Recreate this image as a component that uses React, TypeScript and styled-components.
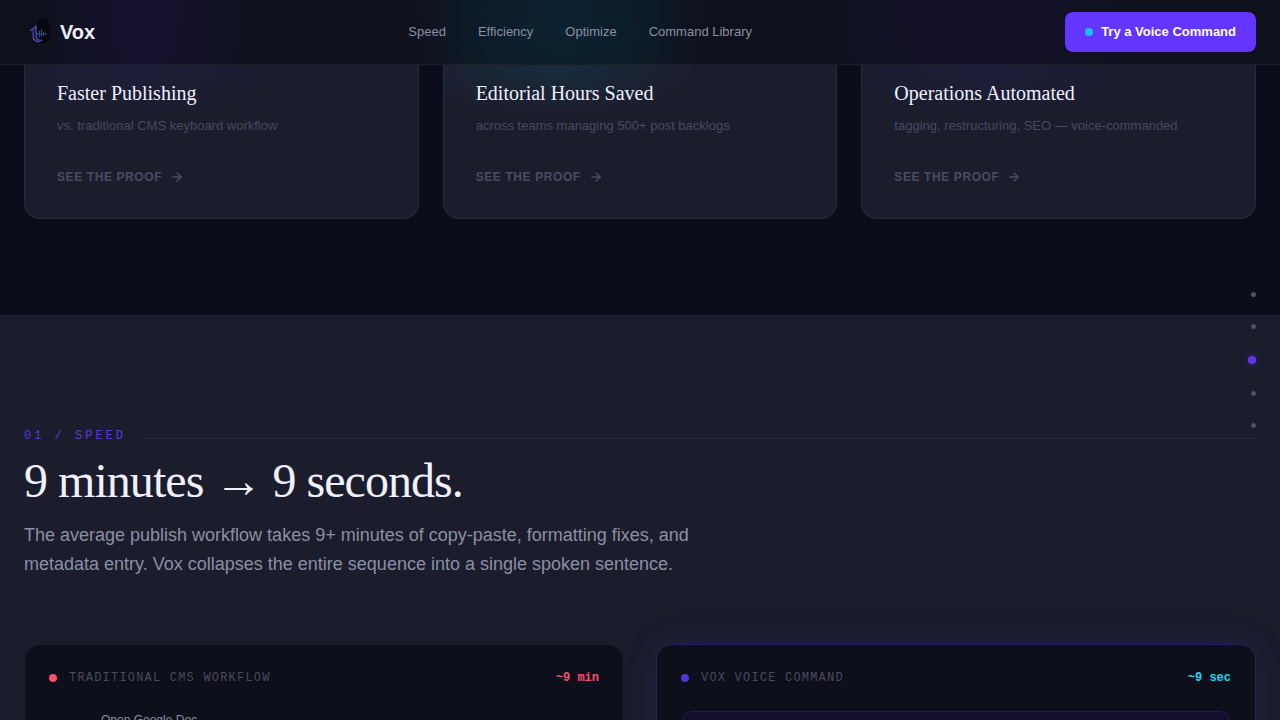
import React from "react";
import styled, { createGlobalStyle } from "styled-components";
import { ArrowRight } from "lucide-react";

const sans = `"Liberation Sans", Arial, sans-serif`;
const serif = `"Liberation Serif", "Times New Roman", serif`;
const mono = `"Liberation Mono", "Courier New", monospace`;

const GlobalStyle = createGlobalStyle`
  *, *::before, *::after { box-sizing: border-box; }
  body {
    margin: 0;
    background: #0c0d1a;
    color: #f0f0ff;
    font-family: ${sans};
  }
  h1, h2, h3, p, ol { margin: 0; padding: 0; }
  a { color: inherit; text-decoration: none; }
`;

const Page = styled.div`
  height: 100vh;
  overflow: hidden;
  display: flex;
  flex-direction: column;
`;

const Header = styled.header`
  flex: none;
  height: 65px;
  padding: 0 24px;
  display: flex;
  align-items: center;
  justify-content: space-between;
  border-bottom: 1px solid #1c1e2b;
  background:
    radial-gradient(ellipse 110px 260px at 145px 0, rgba(28, 18, 66, 0.5), rgba(28, 18, 66, 0.35) 45%, transparent),
    radial-gradient(ellipse 150px 260px at 560px 0, rgba(10, 48, 64, 0.55), rgba(10, 48, 64, 0.4) 45%, transparent),
    radial-gradient(ellipse 170px 260px at 980px 0, rgba(28, 18, 62, 0.4), rgba(28, 18, 62, 0.3) 45%, transparent),
    #0e111c;
`;

const Brand = styled.a`
  display: flex;
  align-items: center;
  gap: 8px;
  font-size: 20px;
  line-height: 24px;
  font-weight: 700;
`;

const Nav = styled.nav`
  display: flex;
  gap: 32px;
  font-size: 13px;
  line-height: 20px;
  color: #8b8fa3;
`;

const CtaButton = styled.button`
  display: flex;
  align-items: center;
  gap: 8px;
  height: 40px;
  padding: 0 20px;
  border: 0;
  border-radius: 8px;
  background: #6236ff;
  color: #fff;
  font: 700 13px/20px ${sans};
`;

const StatusDot = styled.span<{ $color: string }>`
  flex: none;
  width: 8px;
  height: 8px;
  border-radius: 50%;
  background: ${(p) => p.$color};
`;

const ProofSection = styled.section`
  flex: none;
  padding: 0 24px 96px;
  display: grid;
  grid-template-columns: repeat(3, 1fr);
  gap: 24px;
`;

const ProofCard = styled.article<{ $glow: string; $glowAt: string }>`
  padding: 16px 32px 32px;
  border: 1px solid #282b3a;
  border-top: 0;
  border-radius: 0 0 16px 16px;
  background:
    radial-gradient(ellipse 150px 52px at ${(p) => p.$glowAt} 0, ${(p) => p.$glow}, transparent),
    #1b1d2d;
`;

const CardTitle = styled.h3`
  font: 400 20px/24px ${serif};
`;

const CardNote = styled.p`
  margin-top: 11px;
  font-size: 13px;
  line-height: 20px;
  color: #484a5e;
`;

const ProofLink = styled.a`
  margin-top: 32px;
  display: flex;
  align-items: center;
  gap: 8px;
  font-size: 12px;
  line-height: 18px;
  font-weight: 700;
  letter-spacing: 0.05em;
  color: #4a4c60;
`;

const SpeedSection = styled.section`
  flex: none;
  padding: 110px 24px 96px;
  border-top: 1px solid #222534;
  background: #1b1d2d;
`;

const Eyebrow = styled.div`
  display: flex;
  align-items: baseline;
  gap: 16px;
  font: 400 12px/20px ${mono};
  letter-spacing: 3px;
  color: #5a38e0;
  &::after {
    content: "";
    flex: 1;
    height: 1px;
    background: #272a39;
  }
`;

const Headline = styled.h2`
  margin-top: 9px;
  font: 400 48px/52px ${serif};
  letter-spacing: -0.02em;
`;

const Lead = styled.p`
  margin-top: 14px;
  max-width: 680px;
  font-size: 18px;
  line-height: 29px;
  color: #8b8fa5;
`;

const Comparison = styled.div`
  margin-top: 65px;
  display: grid;
  grid-template-columns: 1fr 1fr;
  gap: 32px;
`;

const Panel = styled.article<{ $featured?: boolean }>`
  min-height: 320px;
  padding: 24px;
  border: 1px solid ${(p) => (p.$featured ? "#282058" : "#1d1f2e")};
  border-radius: 16px;
  background: #0d0f1a;
  box-shadow: ${(p) => (p.$featured ? "0 0 40px rgba(98, 54, 255, 0.08)" : "none")};
`;

const PanelHead = styled.div`
  display: flex;
  align-items: center;
  gap: 12px;
  font: 400 12px/18px ${mono};
`;

const PanelTitle = styled.h3`
  flex: 1;
  font: inherit;
  letter-spacing: 0.1em;
  color: #494b60;
`;

const Duration = styled.strong<{ $color: string }>`
  color: ${(p) => p.$color};
`;

const Steps = styled.ol`
  margin-top: 24px;
  padding-left: 52px;
  list-style: none;
  font-size: 12px;
  line-height: 18px;
  color: #8b8fa3;
`;

const Transcript = styled.div`
  margin-top: 24px;
  height: 120px;
  border: 1px solid #231c4b;
  border-radius: 12px;
  background: #140f2a;
`;

const SectionDots = styled.nav`
  position: fixed;
  top: 50%;
  right: 24px;
  transform: translateY(-50%);
  display: flex;
  flex-direction: column;
  align-items: flex-end;
  gap: 27px;
`;

const SectionDot = styled.a<{ $active?: boolean }>`
  width: ${(p) => (p.$active ? 8 : 5)}px;
  height: ${(p) => (p.$active ? 8 : 5)}px;
  border-radius: 50%;
  background: ${(p) => (p.$active ? "#6236ff" : "#4f5062")};
  box-shadow: ${(p) => (p.$active ? "0 0 8px rgba(98, 54, 255, 0.3)" : "none")};
`;

const VoxMark = () => (
  <svg width="28" height="28" viewBox="0 0 28 28" aria-hidden="true">
    <path d="M13 3c2-3 10-3 12 1 2 5 2 10 1 15-1 4-4 7-8 6l-5-6z" fill="#060811" />
    <path
      d="M6.500 12.500C9 11.500 10.800 10 12 8v9c0 3.500 2 5.500 5.500 5.500"
      fill="none"
      stroke="#4c46a4"
      strokeWidth="1.500"
      strokeLinecap="round"
      strokeLinejoin="round"
    />
    <path
      d="M9.200 13v5c0 3.500 2.500 6 6 5.500"
      fill="none"
      stroke="#4c46a4"
      strokeWidth="1.500"
      strokeLinecap="round"
    />
    <path
      d="M13.800 15.500v1.500M15.500 13v6M17.500 11.500v7M19.500 14.500v3M21.500 15.500v1M13.500 16h8.500"
      fill="none"
      stroke="#2d5285"
      strokeWidth="1"
      strokeLinecap="round"
    />
  </svg>
);

const navItems = ["Speed", "Efficiency", "Optimize", "Command Library"];

const proofs = [
  {
    title: "Faster Publishing",
    note: "vs. traditional CMS keyboard workflow",
    glow: "rgba(36, 28, 84, 0.35)",
    at: "110px",
  },
  {
    title: "Editorial Hours Saved",
    note: "across teams managing 500+ post backlogs",
    glow: "rgba(20, 62, 78, 0.45)",
    at: "110px",
  },
  {
    title: "Operations Automated",
    note: "tagging, restructuring, SEO — voice-commanded",
    glow: "rgba(34, 28, 84, 0.35)",
    at: "125px",
  },
];

const sections = ["Intro", "Proof", "Speed section", "Efficiency section", "Optimize section"];

export default function App() {
  return (
    <Page>
      <GlobalStyle />
      <Header>
        <Brand href="#top">
          <VoxMark />
          Vox
        </Brand>
        <Nav>
          {navItems.map((item) => (
            <a key={item} href="#speed">
              {item}
            </a>
          ))}
        </Nav>
        <CtaButton type="button">
          <StatusDot $color="#18c0f5" />
          Try a Voice Command
        </CtaButton>
      </Header>

      <ProofSection>
        {proofs.map((p) => (
          <ProofCard key={p.title} $glow={p.glow} $glowAt={p.at}>
            <CardTitle>{p.title}</CardTitle>
            <CardNote>{p.note}</CardNote>
            <ProofLink href="#speed">
              SEE THE PROOF
              <ArrowRight size={14} strokeWidth={2.5} />
            </ProofLink>
          </ProofCard>
        ))}
      </ProofSection>

      <SpeedSection id="speed">
        <Eyebrow>01 / SPEED</Eyebrow>
        <Headline>9 minutes → 9 seconds.</Headline>
        <Lead>
          The average publish workflow takes 9+ minutes of copy-paste, formatting fixes, and
          metadata entry. Vox collapses the entire sequence into a single spoken sentence.
        </Lead>
        <Comparison>
          <Panel>
            <PanelHead>
              <StatusDot $color="#f5516c" />
              <PanelTitle>TRADITIONAL CMS WORKFLOW</PanelTitle>
              <Duration $color="#f5516c">~9 min</Duration>
            </PanelHead>
            <Steps>
              <li>Open Google Doc</li>
            </Steps>
          </Panel>
          <Panel $featured>
            <PanelHead>
              <StatusDot $color="#5035d2" />
              <PanelTitle>VOX VOICE COMMAND</PanelTitle>
              <Duration $color="#22d3ee">~9 sec</Duration>
            </PanelHead>
            <Transcript />
          </Panel>
        </Comparison>
      </SpeedSection>

      <SectionDots aria-label="Sections">
        {sections.map((name, i) => (
          <SectionDot key={name} href="#speed" aria-label={name} $active={i === 2} />
        ))}
      </SectionDots>
    </Page>
  );
}
